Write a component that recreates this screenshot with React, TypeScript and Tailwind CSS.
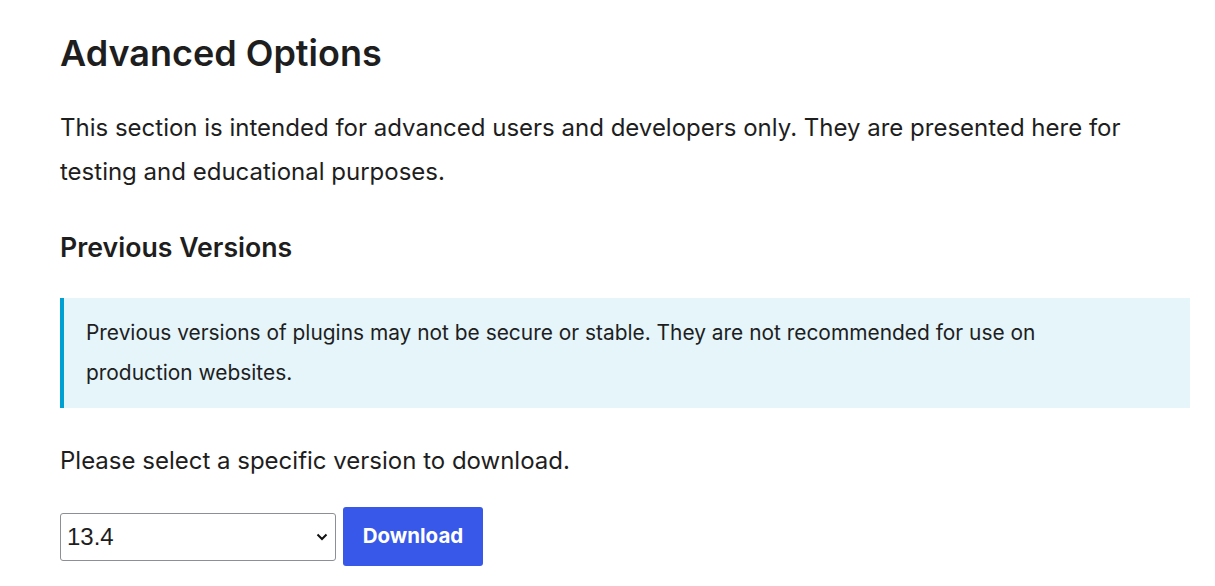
import React from "react";

export default function App() {
  return (
    <div className="min-h-screen bg-white text-[#1e1e1e]" style={{ fontFamily: "Inter, 'Noto Sans', sans-serif" }}>
      <div className="w-[1130px] ml-[60px] pt-[31px]">
        <h2 className="text-[36px] leading-[44px] font-semibold">Advanced Options</h2>
        <p className="mt-[31px] text-[24px] leading-[44px]">
          This section is intended for advanced users and developers only. They are presented here for testing and educational purposes.
        </p>
        <h3 className="mt-[35px] text-[26.7px] leading-[36px] font-semibold">Previous Versions</h3>
        <div className="mt-[33px] border-l-4 border-[#00a0d2] bg-[#e5f5fa] pl-[22px] pr-[80px] py-[15px] text-[20.9px] leading-[40px]">
          Previous versions of plugins may not be secure or stable. They are not recommended for use on production websites.
        </div>
        <p className="mt-[31px] text-[24px] leading-[44px]">Please select a specific version to download.</p>
        <div className="mt-[24px] flex items-center gap-[7px]">
          <div className="relative w-[276px] h-[48px] border border-[#8c8f94] rounded-[3px] bg-white flex items-center">
            <span className="pl-[6px] text-[24px]" style={{ fontFamily: "'Liberation Sans', Arial, sans-serif" }}>13.4</span>
            <svg className="absolute right-[7px] top-1/2 -translate-y-1/2" width="12" height="8" viewBox="0 0 12 8">
              <path d="M1.5 1.5 L6 6 L10.5 1.5" fill="none" stroke="#111" strokeWidth="2" />
            </svg>
          </div>
          <button className="h-[59px] w-[140px] rounded-[3px] bg-[#3858e9] text-white text-[20.5px] font-bold">Download</button>
        </div>
      </div>
    </div>
  );
}
